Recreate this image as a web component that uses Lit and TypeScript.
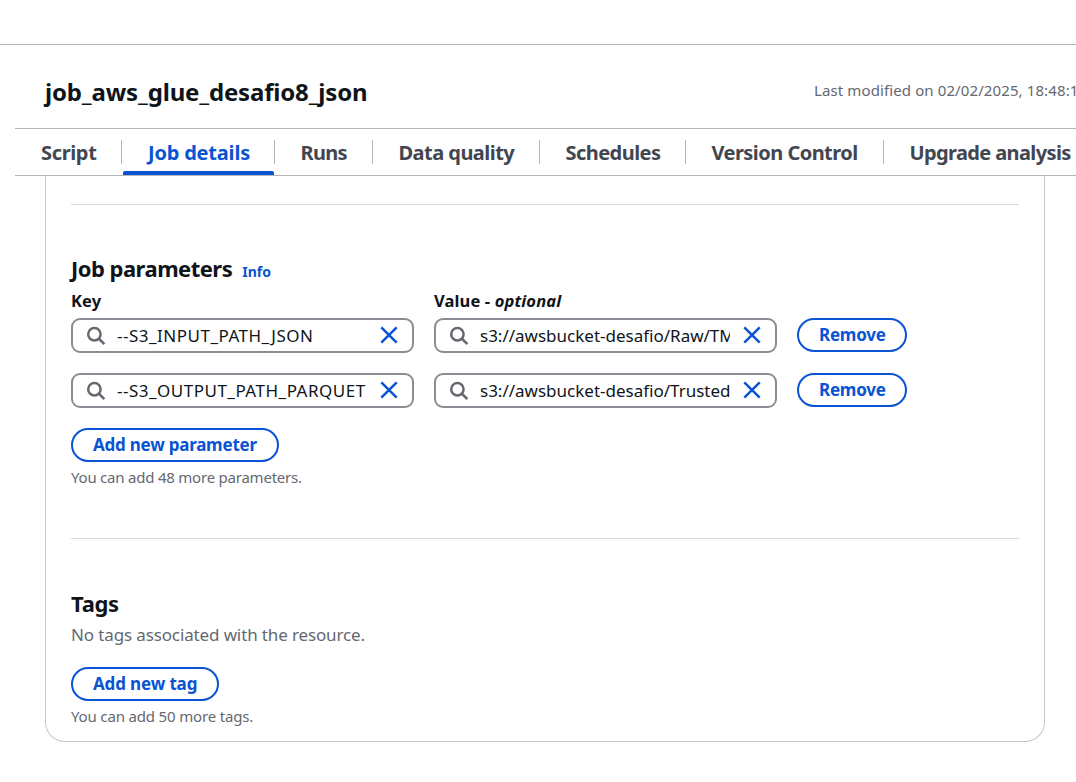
import { LitElement, html, css } from "lit";
import { customElement } from "lit/decorators.js";

const searchIcon = html`<svg class="search" viewBox="0 0 20 20" width="20" height="20" fill="none" stroke="#656871" stroke-width="2.5"><circle cx="8.4" cy="8.2" r="6.2"/><path d="M12.7 12.5 18.4 18.2"/></svg>`;
const closeIcon = html`<svg class="close" viewBox="0 0 18 18" width="18" height="18" fill="none" stroke="#0a53d3" stroke-width="2.5"><path d="M1.3 1.3l15.4 15.4M16.7 1.3L1.3 16.7"/></svg>`;

const tabs = ["Script", "Job details", "Runs", "Data quality", "Schedules", "Version Control", "Upgrade analysis"];
const parameters = [
  ["--S3_INPUT_PATH_JSON", "s3://awsbucket-desafio/Raw/TMDB"],
  ["--S3_OUTPUT_PATH_PARQUET", "s3://awsbucket-desafio/Trusted/"],
];

@customElement("app-root")
export class AppRoot extends LitElement {
  static styles = css`
    :host { display: block; box-sizing: border-box; width: 100%; height: 782px; overflow: hidden; background: #fff; color: #0f141a; font: 17px/24px "Noto Sans", sans-serif; padding-top: 44px; white-space: nowrap; }
    * { box-sizing: border-box; }
    header { border-top: 1px solid #b4b4bb; height: 84px; padding: 31px 0 0 45px; display: flex; }
    h1 { margin: 0; font-size: 24px; line-height: 32px; letter-spacing: -.17px; width: 769px; flex: none; font-weight: 700; }
    .modified { font-size: 15px; line-height: 28px; letter-spacing: .11px; color: #656871; }
    nav { margin-left: 15px; height: 48px; border: solid #b4b4bb; border-width: 1px 0; display: grid; grid-template-columns: 106px 153px 98px 167px 146px 198px 192px; }
    .tab { position: relative; height: 46px; padding: 1px 0 0 26.5px; font-size: 20px; line-height: 45px; letter-spacing: -.54px; font-weight: 700; color: #424650; }
    .tab:first-child { letter-spacing: -.35px; padding-left: 26px; }
    .tab + .tab::before { content: ""; position: absolute; left: 0; top: 11px; height: 24px; border-left: 1px solid #b4b4bb; }
    .tab.active { color: #0a53d3; letter-spacing: -.2px; padding-left: 27px; }
    .active::after { content: ""; position: absolute; left: 2px; right: 0; bottom: 0; height: 4px; border-radius: 2px 2px 0 0; background: #0a53d3; }
    .tab:nth-child(3) { letter-spacing: -.7px; }
    .tab:nth-child(7) { letter-spacing: -.62px; }
    main { margin-left: 45px; width: 1000px; height: 566px; border: 1px solid #c6c6cd; border-top: 0; border-radius: 0 0 20px 20px; padding: 28px 25px 0; }
    .params { height: 335px; border: solid #d5d9dc; border-width: 1px 0; padding-top: 47px; }
    h2 { margin: 0; font-size: 22px; line-height: 32px; letter-spacing: -.52px; }
    .tags h2 { letter-spacing: -.3px; }
    .info { color: #0a53d3; font-size: 14px; letter-spacing: 0; margin-left: 10px; }
    .row { display: grid; grid-template-columns: 343px 343px 110px; column-gap: 20px; margin-bottom: 20px; }
    .labels { font-size: 16.5px; line-height: 24px; letter-spacing: .13px; font-weight: 700; margin: 1px 0 5px; }
    .field { height: 35px; border: 2px solid #8c8c94; border-radius: 9px; display: flex; align-items: center; padding: 0 14px 0 13px; }
    .text { flex: 1; overflow: hidden; margin: 0 13px 0 11px; }
    .key .text { letter-spacing: .5px; margin-right: 9px; }
    svg { flex: none; }
    .close { margin-bottom: 2px; }
    button { font: 700 17px/28px "Noto Sans", sans-serif; letter-spacing: -.23px; color: #0a53d3; background: #fff; border: 2px solid #0a53d3; border-radius: 18px; height: 34px; padding: 0 20px; display: block; }
    .hint { font-size: 15px; line-height: 24px; letter-spacing: -.22px; color: #656871; margin-top: 3px; }
    .tags { padding-top: 48px; }
    .tags button { letter-spacing: -.14px; }
    .tags .hint { letter-spacing: -.16px; }
    .empty { color: #656871; letter-spacing: -.13px; margin: 4px 0 20px; }
  `;
  render() {
    return html`
      <header><h1>job_aws_glue_desafio8_json</h1><span class="modified">Last modified on 02/02/2025, 18:48:12</span></header>
      <nav>${tabs.map((t, i) => html`<div class="tab ${i === 1 ? "active" : ""}">${t}</div>`)}</nav>
      <main>
        <section class="params">
          <h2>Job parameters<span class="info">Info</span></h2>
          <div class="row labels"><span>Key</span><span>Value - <i>optional</i></span></div>
          ${parameters.map((p) => html`<div class="row">
            ${p.map((v, i) => html`<div class="field ${i === 0 ? "key" : ""}">${searchIcon}<span class="text">${v}</span>${closeIcon}</div>`)}
            <button>Remove</button></div>`)}
          <button>Add new parameter</button>
          <div class="hint">You can add 48 more parameters.</div>
        </section>
        <section class="tags">
          <h2>Tags</h2>
          <div class="empty">No tags associated with the resource.</div>
          <button>Add new tag</button>
          <div class="hint">You can add 50 more tags.</div>
        </section>
      </main>`;
  }
}
